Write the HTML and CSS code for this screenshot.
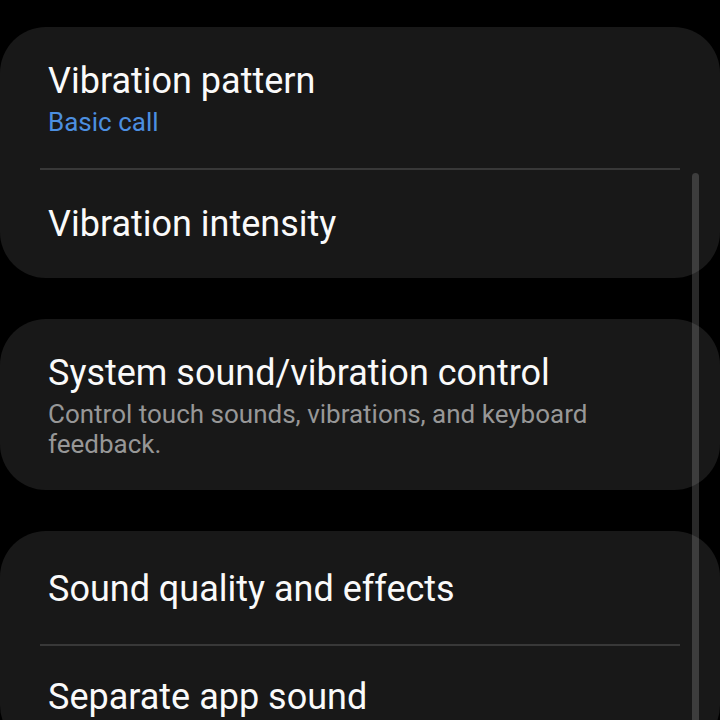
FILE: index.html
```html
<!doctype html>
<html>
  <head>
    <meta charset=utf-8>
    <title>Sounds and vibration</title>
    <link rel="stylesheet" href="styles.css">
  </head>
  <body>
    <div class=list>
      <div class=card>
        <div class="row first">
          <div class=title>Vibration pattern</div>
          <div class="sub accent">Basic call</div>
        </div>
        <div class=divider></div>
        <div class=row>
          <div class=title>Vibration intensity</div>
        </div>
      </div>

      <div class=card>
        <div class="row first">
          <div class=title>System sound/vibration control</div>
          <div class=sub>Control touch sounds, vibrations, and keyboard feedback.</div>
        </div>
      </div>

      <div class=card>
        <div class="row first tall">
          <div class=title>Sound quality and effects</div>
        </div>
        <div class=divider></div>
        <div class="row short">
          <div class=title>Separate app sound</div>
        </div>
      </div>
    </div>

    <div class=scrollbar></div>
  </body>
</html>
```

FILE: styles.css
```css
html, body {
  margin: 0;
  background: #000;
  height: 720px;
  overflow: hidden;
}

body {
  position: relative;
  font-family: Roboto, 'Noto Sans', sans-serif;
  color: #fafafa;
}

.list {
  display: flex;
  flex-direction: column;
  gap: 41px;
  padding-top: 27px;
}

.card {
  background: #181818;
  border-radius: 46px;
}

.row {
  padding: 33px 48px;
}
.row.first { padding-bottom: 31px; }
.row.tall { padding-top: 37px; padding-bottom: 34px; }
.row.short { padding-top: 30px; }

.divider {
  height: 2px;
  margin: 0 40px;
  background: #383838;
}

.title {
  font-size: 36px;
  line-height: 42px;
}

.sub {
  margin-top: 5px;
  font-size: 26px;
  line-height: 30px;
  color: #979797;
  max-width: 600px;
}
.sub.accent { color: #4c8fe0; }

.scrollbar {
  position: absolute;
  left: 692px;
  top: 173px;
  width: 7px;
  height: 560px;
  border-radius: 4px;
  background: rgba(255, 255, 255, 0.16);
}
```
